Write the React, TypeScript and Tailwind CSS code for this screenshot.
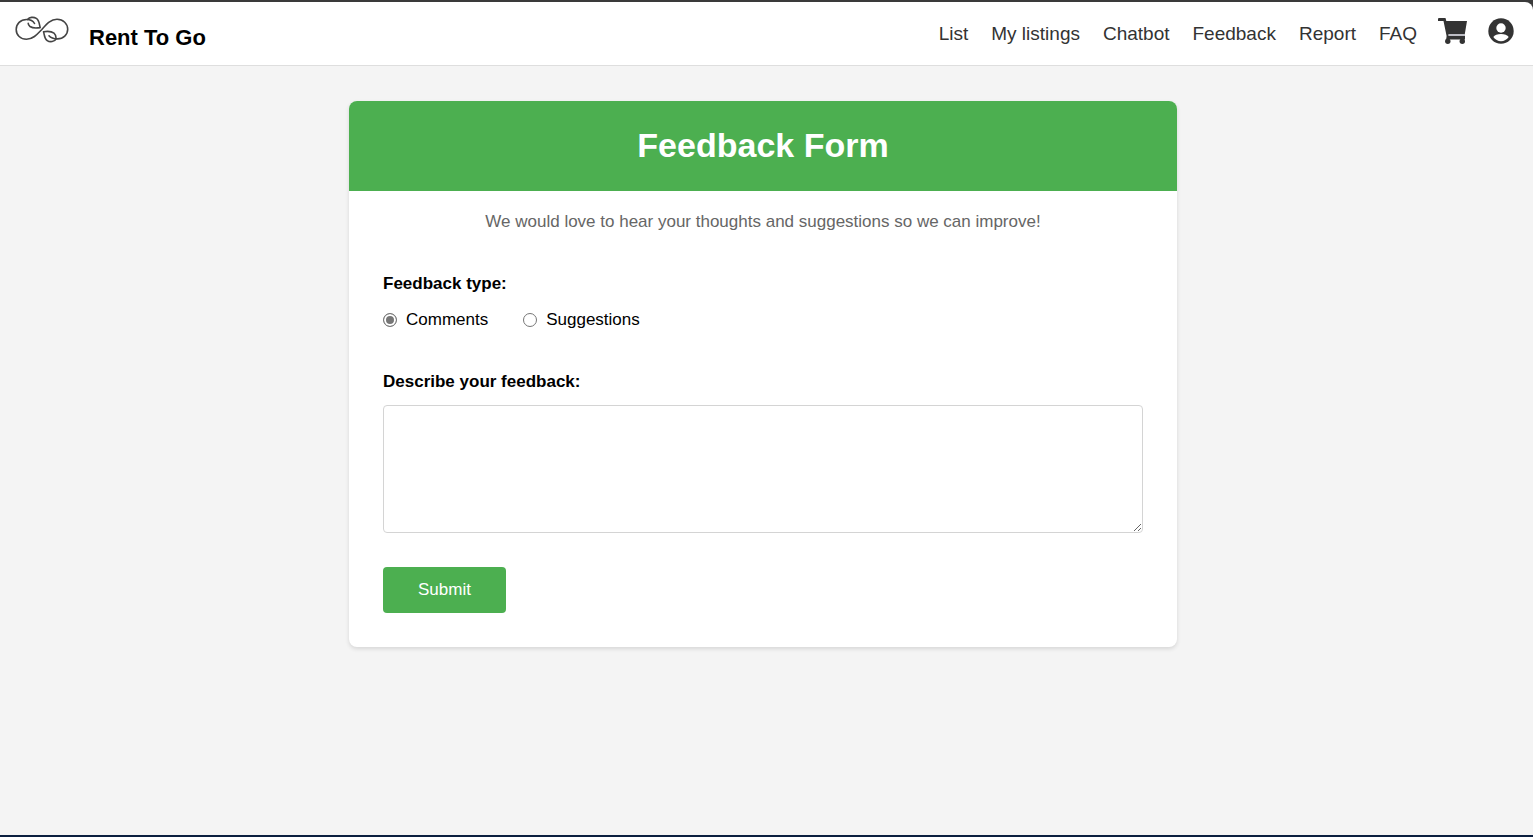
const links = ["List", "My listings", "Chatbot", "Feedback", "Report", "FAQ"];

function Logo() {
  return (
    <svg
      viewBox="0 0 54 28"
      className="h-7 w-[54px]"
      fill="none"
      stroke="#444"
      strokeWidth="1.6"
      strokeLinecap="round"
      strokeLinejoin="round"
      aria-hidden="true"
    >
      <path d="M19.500 7.500C18 4.500 15 3.500 11.500 3.500C5.500 3.500 1.200 8 1.200 13.500C1.200 19 5.500 23.300 11.500 23.300C18 23.300 22.500 18 26.800 13.500C31.500 8.200 35.500 3.300 42 3.300C48.300 3.300 52.700 7.800 52.700 13.200C52.700 18.600 48.300 22.900 42.500 22.900C38.500 22.900 35.800 22 34 19.800" />
      <path d="M12.500 3.500C14.500 1.200 18.500 .600 21.300 2.400C24.500 4.500 24.200 8.500 25.200 11.600C21.500 12.300 17.500 12.200 15 10.500C13.800 9.600 13.200 8.500 13.200 7.300" />
      <path d="M28.500 15.800C32 15.200 36.500 15.300 39 17.200C40.800 18.600 41 20.800 41.200 22.800C39.500 25.800 35 26.500 32.200 24.600C29 22.500 29.600 18.800 28.500 15.800Z" />
    </svg>
  );
}

function CartIcon() {
  return (
    <svg viewBox="0 0 29 26" className="h-[26px] w-[29px]" fill="currentColor" aria-hidden="true">
      <path d="M1 0H7.500L8.300 3H29L26.800 16H10.800V18H27V21.500H8.200L8.600 18L5.500 3H0V1Q0 0 1 0Z" />
      <path d="M10.500 16H27V18H10.500Z" fill="#bdbdc4" />
      <circle cx="9.800" cy="23.300" r="2.700" />
      <circle cx="24.300" cy="23.300" r="2.700" />
    </svg>
  );
}

function AccountIcon() {
  return (
    <svg viewBox="0 0 26 26" className="size-[26px]" aria-hidden="true">
      <circle cx="13" cy="13" r="12.700" fill="currentColor" />
      <circle cx="13" cy="10" r="4.700" fill="#fff" />
      <path d="M5.300 19C6.500 17 9.500 16 13 16S19.500 17 20.700 19C19 21.700 16 23.200 13 23.200S7 21.700 5.300 19Z" fill="#fff" />
    </svg>
  );
}

export default function App() {
  return (
    <div className="flex min-h-screen flex-col border-b-2 border-[#0b1f3f] bg-[#3a3a3a] pt-0.5 font-['Liberation_Sans',Arial,sans-serif] text-black">
      <header className="flex h-16 items-center justify-between rounded-tr-lg border-b border-[#dedede] bg-white pr-[19px] pl-[15px]">
        <a href="#home" className="flex items-start gap-5">
          <Logo />
          <span className="pt-2 text-[22px] leading-7 font-bold">Rent To Go</span>
        </a>
        <nav className="flex items-center gap-[21px] text-[19px] leading-6 text-[#333]">
          <div className="flex gap-[23px]">
            {links.map((label) => (
              <a key={label} href={"#" + label.toLowerCase().replace(" ", "-")}>
                {label}
              </a>
            ))}
          </div>
          <div className="flex items-center gap-[21px] pb-1.5">
            <a href="#cart" aria-label="Cart">
              <CartIcon />
            </a>
            <a href="#account" aria-label="Account">
              <AccountIcon />
            </a>
          </div>
        </nav>
      </header>
      <main className="grow bg-[#f4f4f4] pt-[35px] pr-[7px]">
        <section className="mx-auto max-w-[828px] overflow-hidden rounded-lg bg-white shadow-[0_2px_4px_rgba(0,0,0,0.12)]">
          <h1 className="bg-[#4caf50] pt-6 pb-[26px] text-center text-[34px] leading-10 font-bold text-white">
            Feedback Form
          </h1>
          <p className="pt-[19px] text-center text-[17px] leading-6 text-[#666]">
            We would love to hear your thoughts and suggestions so we can improve!
          </p>
          <form className="px-[34px] pt-[38px] pb-[34px] text-[17px] leading-6" onSubmit={(e) => e.preventDefault()}>
            <fieldset>
              <legend className="font-bold">Feedback type:</legend>
              <div className="flex gap-[35px] pt-3">
                <label className="flex items-center gap-[9px]">
                  <input
                    type="radio"
                    name="type"
                    defaultChecked
                    className="size-[14px] appearance-none rounded-full border border-[#767676] bg-white checked:bg-[#767676] checked:shadow-[inset_0_0_0_2px_#fff]"
                  />
                  Comments
                </label>
                <label className="flex items-center gap-[9px]">
                  <input
                    type="radio"
                    name="type"
                    className="size-[14px] appearance-none rounded-full border border-[#767676] bg-white checked:bg-[#767676] checked:shadow-[inset_0_0_0_2px_#fff]"
                  />
                  Suggestions
                </label>
              </div>
            </fieldset>
            <label htmlFor="feedback" className="mt-[38px] block font-bold">
              Describe your feedback:
            </label>
            <textarea
              id="feedback"
              className="mt-[11px] block h-32 w-full resize-y rounded border border-[#d4d4d4] p-2"
            />
            <button type="submit" className="mt-[34px] rounded bg-[#4caf50] px-[35px] py-[11px] text-white">
              Submit
            </button>
          </form>
        </section>
      </main>
    </div>
  );
}
